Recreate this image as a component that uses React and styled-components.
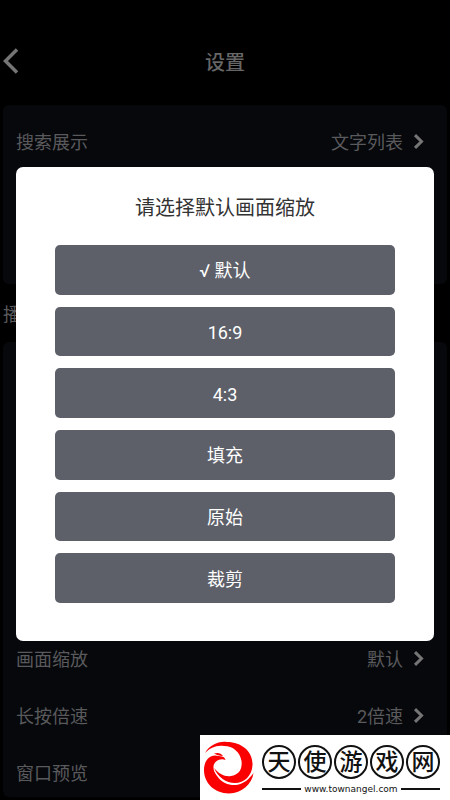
import React from "react";
import styled, { createGlobalStyle, css } from "styled-components";

const GlobalStyle = createGlobalStyle`
  * { box-sizing: border-box; }
  body {
    margin: 0;
    background: #000;
    font-family: Roboto, "Noto Sans CJK SC", sans-serif;
  }
  button { font: inherit; border: 0; cursor: pointer; }
`;

const Page = styled.div`
  position: relative;
  height: 100vh;
  display: flex;
  flex-direction: column;
  overflow: hidden;
  padding: 0 3px 3px;
  color: #5a5a5c;
`;

const Header = styled.header`
  flex: none;
  display: grid;
  grid-template-columns: 32px 1fr 32px;
  align-items: center;
  height: 105px;
  padding-top: 20px;
`;

const BackButton = styled.button`
  display: flex;
  padding: 0 0 4px;
  background: none;
  color: #757575;
`;

const Title = styled.h1`
  margin: 0;
  font-size: 20px;
  line-height: 28px;
  font-weight: 500;
  text-align: center;
  color: #666;
`;

const Card = styled.section`
  padding: 9px 12px 0 13px;
  border-radius: 6px;
  background: #06080c;
  ${(p) =>
    p.$fill
      ? css`
          flex: 1;
          min-height: 0;
          overflow: hidden;
          padding-top: 289px;
        `
      : css`
          flex: none;
          min-height: 179px;
        `}
`;

const Row = styled.button`
  display: flex;
  align-items: center;
  justify-content: space-between;
  width: 100%;
  height: 57px;
  padding: 0 10px 0 0;
  background: none;
  color: #5a5a5c;
  font-size: 18px;
  line-height: 26px;
`;

const RowValue = styled.span`
  display: flex;
  align-items: center;
  gap: 10px;
`;

const SectionTitle = styled.h2`
  flex: none;
  margin: 0;
  padding-top: 2px;
  height: 58px;
  font-size: 18px;
  line-height: 58px;
  font-weight: 400;
`;

const Overlay = styled.div`
  position: absolute;
  inset: 0;
  display: flex;
  align-items: center;
  padding: 8px 16px 0;
`;

const Dialog = styled.div`
  flex: 1;
  padding: 26px 39px 38px;
  border-radius: 7px;
  background: #fff;
`;

const DialogTitle = styled.h2`
  margin: 0 0 22px;
  font-size: 20px;
  line-height: 30px;
  font-weight: 400;
  text-align: center;
  color: #333;
`;

const Options = styled.div`
  display: grid;
  grid-auto-rows: 1fr;
  gap: 12px;
  height: 358px;
`;

const Option = styled.button`
  padding: 3px 6px 0;
  border-radius: 5px;
  background: #5d6069;
  color: #fff;
  font-size: 18px;
  line-height: 26px;
`;

const Watermark = styled.aside`
  position: absolute;
  right: 0;
  bottom: 0;
  display: flex;
  align-items: flex-start;
  gap: 8px;
  width: 250px;
  height: 65px;
  padding: 6px 10px 0 4px;
  background: #fff;
  color: #111;
`;

const Brand = styled.div`
  flex: 1;
  padding-top: 4px;
`;

const BrandName = styled.div`
  display: flex;
  justify-content: space-between;
`;

const Circled = styled.span`
  display: flex;
  align-items: center;
  justify-content: center;
  width: 34px;
  height: 34px;
  padding-top: 2px;
  border: 2px solid #111;
  border-radius: 50%;
  font-size: 23px;
  line-height: 30px;
  font-weight: 500;
`;

const BrandSite = styled.a`
  display: flex;
  align-items: center;
  gap: 3px;
  padding-top: 2px;
  color: #111;
  font: 400 9px/16px "DejaVu Sans", sans-serif;
  text-decoration: none;
  &::before,
  &::after {
    content: "";
    flex: 1;
    height: 2px;
    background: #111;
  }
`;

const BackIcon = () => (
  <svg width="16" height="28" viewBox="0 0 16 28" fill="none" stroke="currentColor" strokeWidth="3.5" aria-hidden="true">
    <path d="M14 2.5 2.5 14 14 25.5" />
  </svg>
);

const Chevron = () => (
  <svg width="12" height="18" viewBox="0 0 12 18" fill="none" stroke="#757575" strokeWidth="3" aria-hidden="true">
    <path d="M2 1.200 8.500 7.500 2 13.800" />
  </svg>
);

const PhoenixLogo = () => (
  <svg width="50" height="54" viewBox="0 0 50 54" fill="#fb0000" aria-hidden="true">
    <path d="M1 12C6 4 14 0 23 1C38 1 49 11 48.500 24C48 35 40 42 31 42C22 42 14 36 10 27C15 33 21 36 27 35C35 34 38.500 28 37.500 20C36 11 29 5 20 5C12 4 6 7 1 12Z" />
    <path d="M10 12.500C13 11.500 17 11.500 19 15C15 15 13 14 10 12.500ZM18 15.500C20 16 21 17 21.500 19C18 17.500 15 18.500 12 20.500C8 24 9 30 13 35C18 42 25 44.500 32 44C40 43 45 38 49.500 32C48 43 38 52 25 52.500C10 52 0 42 0 29C0 21 4 15 11 14.500Z" />
  </svg>
);

const SettingRow = ({ label, value }) => (
  <Row type="button">
    <span>{label}</span>
    {value && (
      <RowValue>
        {value}
        <Chevron />
      </RowValue>
    )}
  </Row>
);

const scaleOptions = ["默认", "16:9", "4:3", "填充", "原始", "裁剪"];
const selected = "默认";

export default function App() {
  return (
    <>
      <GlobalStyle />
      <Page>
        <Header>
          <BackButton type="button" aria-label="返回">
            <BackIcon />
          </BackButton>
          <Title>设置</Title>
        </Header>
        <Card>
          <SettingRow label="搜索展示" value="文字列表" />
        </Card>
        <SectionTitle>播</SectionTitle>
        <Card $fill>
          <SettingRow label="画面缩放" value="默认" />
          <SettingRow label="长按倍速" value="2倍速" />
          <SettingRow label="窗口预览" />
        </Card>
        <Overlay>
          <Dialog role="dialog" aria-modal="true" aria-labelledby="scale-title">
            <DialogTitle id="scale-title">请选择默认画面缩放</DialogTitle>
            <Options>
              {scaleOptions.map((name) => (
                <Option key={name} type="button" aria-pressed={name === selected}>
                  {name === selected ? `√ ${name}` : name}
                </Option>
              ))}
            </Options>
          </Dialog>
        </Overlay>
        <Watermark>
          <PhoenixLogo />
          <Brand>
            <BrandName>
              {[..."天使游戏网"].map((char) => (
                <Circled key={char}>{char}</Circled>
              ))}
            </BrandName>
            <BrandSite href="#">www.townangel.com</BrandSite>
          </Brand>
        </Watermark>
      </Page>
    </>
  );
}
